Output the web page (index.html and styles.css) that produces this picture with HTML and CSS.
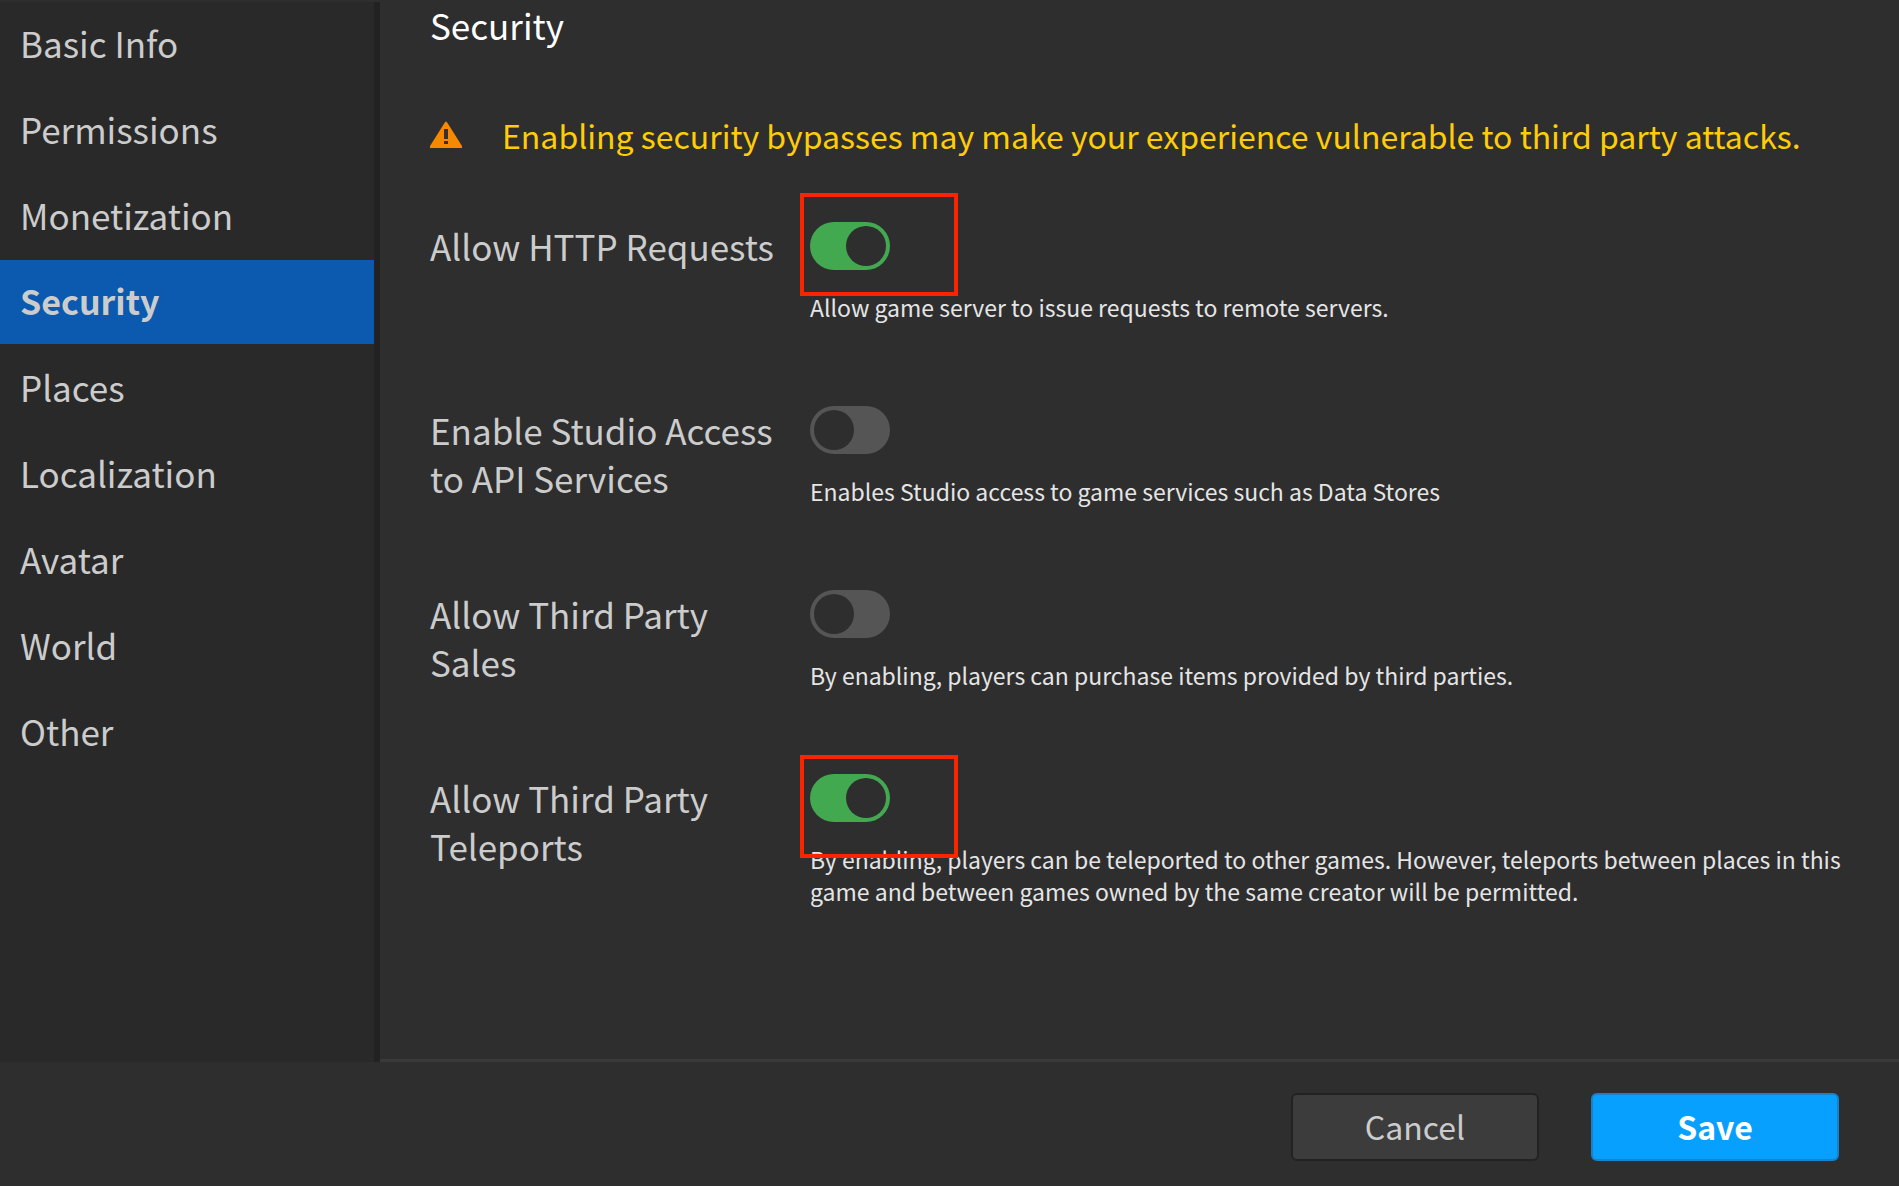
FILE: index.html
```html
<!DOCTYPE html>
<html lang="en">
<head>
<meta charset="utf-8">
<title>Game Settings</title>
<link rel="stylesheet" href="styles.css">
</head>
<body>
<form class="dialog">
  <div class="body">
    <nav class="menu">
      <a href="#basic">Basic Info</a>
      <a href="#permissions">Permissions</a>
      <a href="#monetization">Monetization</a>
      <a href="#security" class="active" aria-current="page">Security</a>
      <a href="#places">Places</a>
      <a href="#localization">Localization</a>
      <a href="#avatar">Avatar</a>
      <a href="#world">World</a>
      <a href="#other">Other</a>
    </nav>
    <main class="content">
      <h1>Security</h1>
      <p class="warning">
        <svg class="warning-icon" viewBox="0 0 32 28" aria-hidden="true"><path d="M14.500 2Q16-1 17.500 2L32 25v2H0v-2Z" fill="#f68802"/><path d="M14 8h4v10h-4zM14 20h4v3h-4z" fill="#3a3027"/></svg>
        <span>Enabling security bypasses may make your experience vulnerable to third party attacks.</span>
      </p>
      <div class="setting">
        <label for="http">Allow HTTP Requests</label>
        <div class="control"><span class="switch marked"><input type="checkbox" id="http" checked></span>
          <p>Allow game server to issue requests to remote servers.</p></div>
      </div>
      <div class="setting">
        <label for="api">Enable Studio Access to API Services</label>
        <div class="control"><span class="switch"><input type="checkbox" id="api"></span>
          <p>Enables Studio access to game services such as Data Stores</p></div>
      </div>
      <div class="setting">
        <label for="sales">Allow Third Party Sales</label>
        <div class="control"><span class="switch"><input type="checkbox" id="sales"></span>
          <p>By enabling, players can purchase items provided by third parties.</p></div>
      </div>
      <div class="setting">
        <label for="teleports">Allow Third Party Teleports</label>
        <div class="control"><span class="switch marked low"><input type="checkbox" id="teleports" checked></span>
          <p>By enabling, players can be teleported to other games. However, teleports between places in this game and between games owned by the same creator will be permitted.</p></div>
      </div>
    </main>
  </div>
  <footer class="actions">
    <button type="button" class="cancel">Cancel</button>
    <button type="submit" class="save">Save</button>
  </footer>
</form>
</body>
</html>
```
FILE: styles.css
```css
*, *::before, *::after { box-sizing: border-box; }
body { margin: 0; background: #2e2e2e; color: #ccc; font: 35px/48px "Noto Sans CJK SC", "Noto Sans", sans-serif; }
h1, p { margin: 0; font-weight: 400; }
.dialog { min-height: 100vh; display: flex; flex-direction: column; border-top: 2px solid #2e2e2e; }
.body { flex: 1; display: flex; }
.menu { flex: 0 0 380px; display: flex; flex-direction: column; gap: 2px; border-right: 6px solid #222; background: #292929; }
.menu a { height: 84px; padding: 0 20px; line-height: 82px; color: #ccc; text-decoration: none; }
.menu .active { background: #0b5aaf; font-size: 34px; font-weight: 700; }
.content { flex: 1; min-width: 0; padding: 0 40px 0 50px; border-bottom: 3px solid #3a3a3a; }
h1 { font-size: 35px; line-height: 46px; color: #fff; }
.warning { display: flex; align-items: center; gap: 40px; margin: 63px 0; color: #ffcc08; font-size: 32px; }
.warning-icon { width: 32px; height: 28px; flex: none; }
.setting { display: grid; grid-template-columns: 350px 1fr; column-gap: 30px; min-height: 184px; }
.control p { margin-top: 21px; font-size: 23px; line-height: 32px; color: #e5e5e5; }
.switch { position: relative; display: block; width: 80px; height: 48px; }
.switch input { appearance: none; display: flex; align-items: center; width: 80px; height: 48px; margin: 0; padding: 4px; border-radius: 24px; background: #555; }
.switch input::before { content: ""; width: 40px; height: 40px; border-radius: 50%; background: #2e2e2e; }
.switch input:checked { background: #43a951; justify-content: flex-end; }
.marked::after { content: ""; position: absolute; left: -10px; top: -29px; width: 158px; height: 103px; border: 4px solid #fa2400; pointer-events: none; }
.marked.low::after { top: -19px; }
.actions { flex: none; height: 124px; display: flex; justify-content: flex-end; align-items: center; gap: 52px; padding: 6px 60px 0; }
.actions button { width: 248px; height: 68px; border: 2px solid #222; border-radius: 6px; padding: 0 0 2px; background: #3c3c3c; color: #ccc; font: inherit; font-size: 32px; }
.actions .save { background: #08a0ff; border-color: #1683c8; color: #fff; font-weight: 700; }
```
